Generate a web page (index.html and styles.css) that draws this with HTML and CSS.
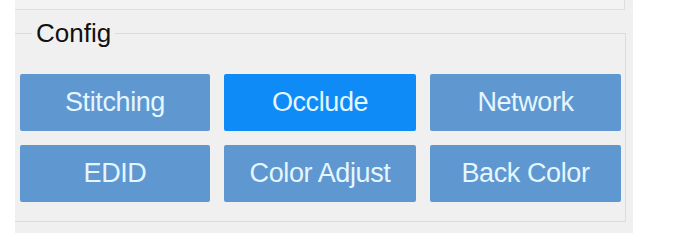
FILE: index.html
```html
<!DOCTYPE html>
<html lang="en">
<head>
    <meta charset="UTF-8">
    <title>Config</title>
    <link rel="stylesheet" href="styles.css">
</head>
<body>
    <div class="panel">
        <div class="top-box"></div>
        <fieldset class="config">
            <legend>Config</legend>
            <div class="btn-grid">
                <button class="cfg-btn">Stitching</button>
                <button class="cfg-btn active">Occlude</button>
                <button class="cfg-btn">Network</button>
                <button class="cfg-btn">EDID</button>
                <button class="cfg-btn">Color Adjust</button>
                <button class="cfg-btn">Back Color</button>
            </div>
        </fieldset>
    </div>
</body>
</html>
```
FILE: styles.css
```css
body {
    margin: 0;
    background-color: #fff;
    font-family: 'Liberation Sans', Arial, sans-serif;
}
.panel {
    margin-left: 15px;
    width: 618px;
    height: 233px;
    background-color: #f0f0f0;
}
.top-box {
    width: 609px;
    height: 9px;
    border-right: 1px solid #dedede;
    border-bottom: 1px solid #dedede;
    background-color: #f3f3f3;
}
.config {
    margin: 8px 0 0 0;
    width: 611px;
    box-sizing: border-box;
    border: 1px solid #dcdcdc;
    border-left: none;
    padding: 25px 0 17px 5px;
    height: 204px;
}
.config legend {
    margin-left: 12px;
    padding: 0 4px;
    font-size: 26px;
    color: #111;
}
.btn-grid {
    display: grid;
    grid-template-columns: 190px 192px 191px;
    grid-template-rows: 57px 57px;
    gap: 14px;
}
.cfg-btn {
    border: none;
    border-radius: 2px;
    background-color: #5f97d1;
    color: #e4f6ff;
    font-family: 'Liberation Sans', Arial, sans-serif;
    font-size: 27px;
    letter-spacing: -0.4px;
    padding: 0;
    cursor: pointer;
}
.cfg-btn.active {
    background-color: #0e8bf6;
}
```
